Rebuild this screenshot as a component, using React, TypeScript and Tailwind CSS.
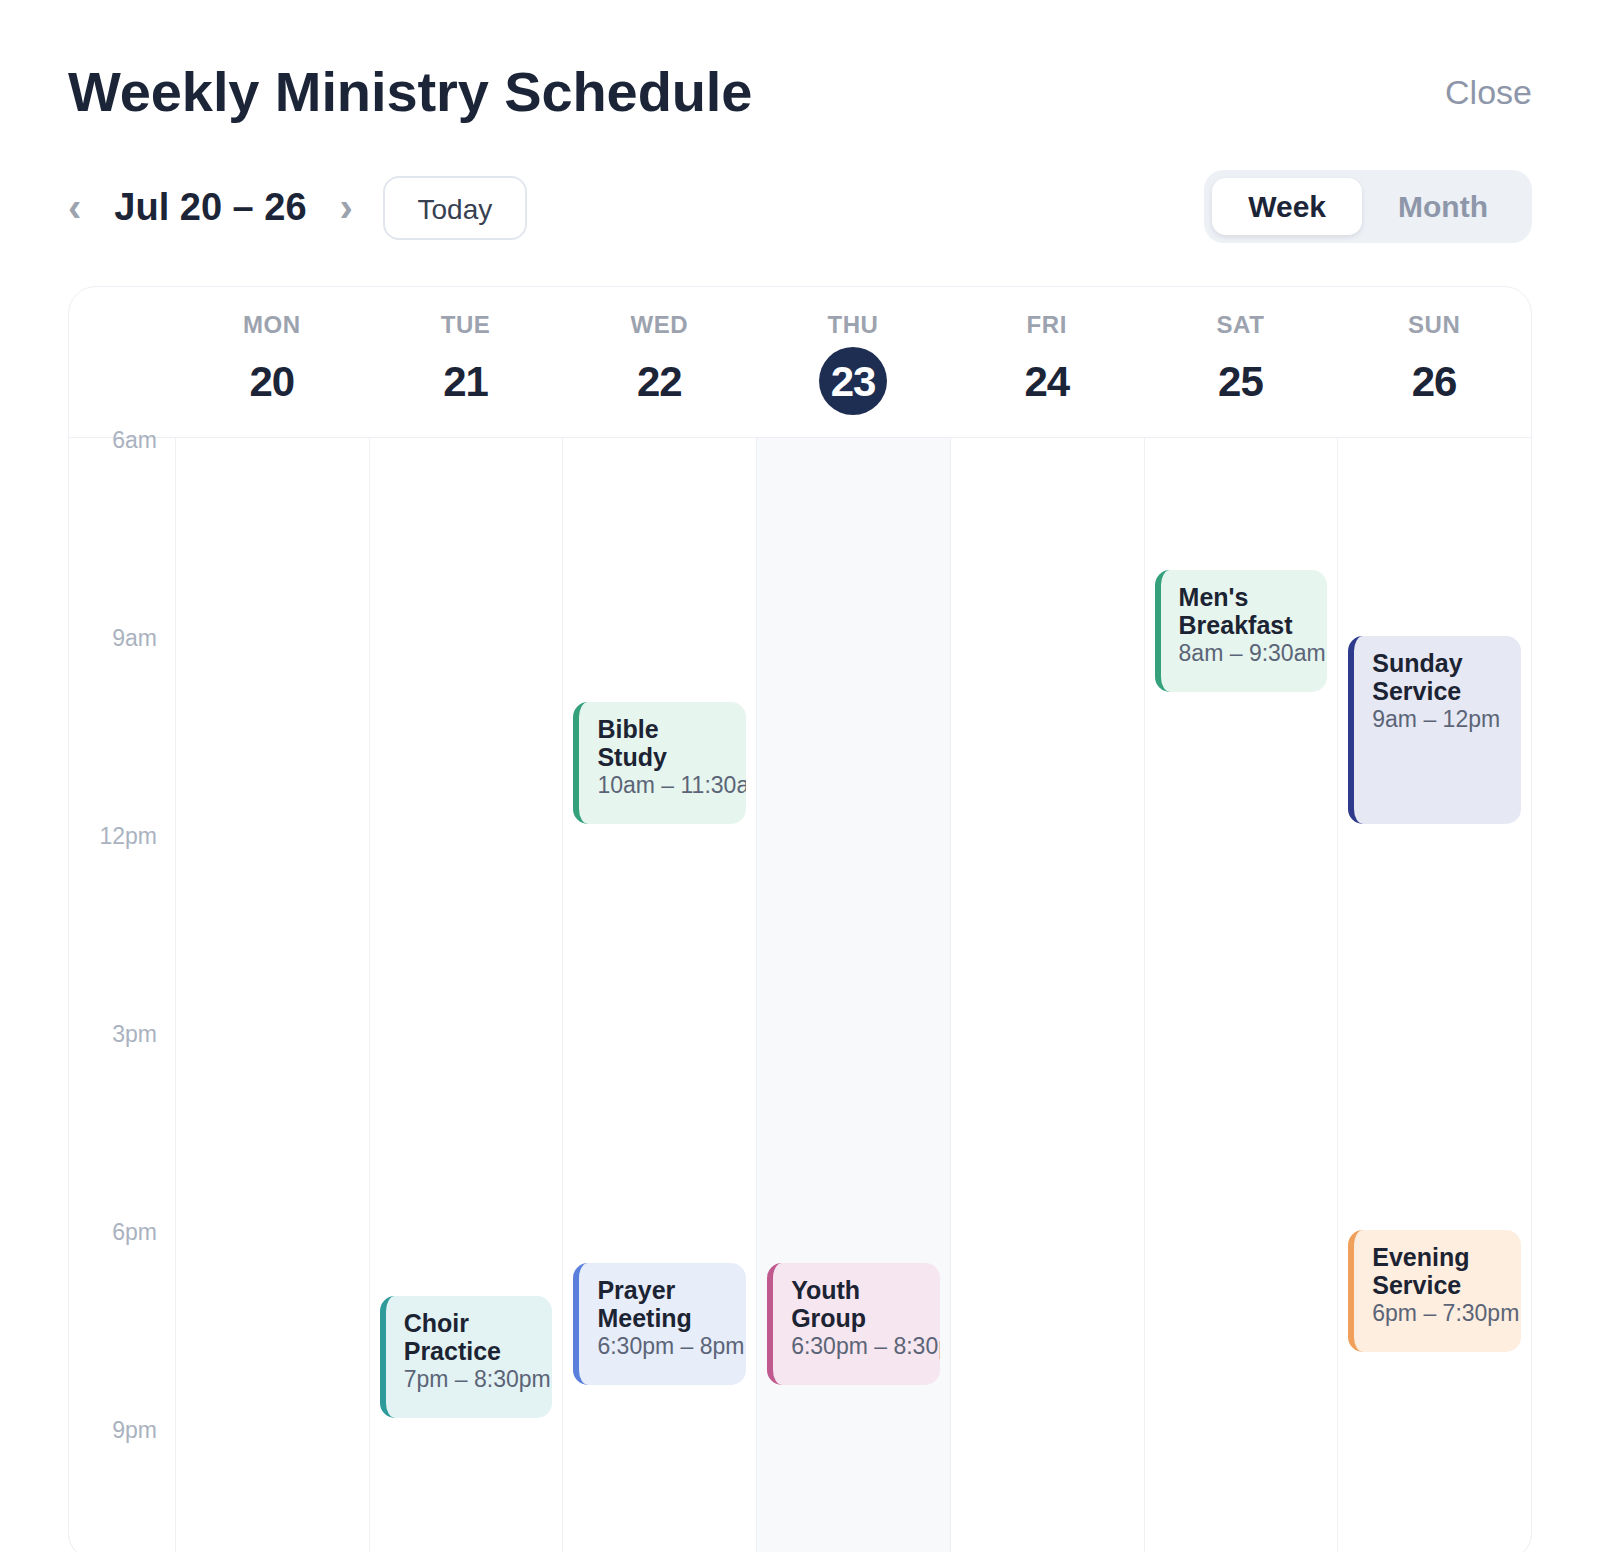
import React from 'react'

const HOUR = 66
const START = 6
const HOURS = 17

const days = [
  { name: 'MON', num: 20 },
  { name: 'TUE', num: 21 },
  { name: 'WED', num: 22 },
  { name: 'THU', num: 23, today: true },
  { name: 'FRI', num: 24 },
  { name: 'SAT', num: 25 },
  { name: 'SUN', num: 26 },
]

type Ev = {
  day: number
  title: string
  time: string
  start: number
  end: number
  tone: string
}

const events: Ev[] = [
  { day: 1, title: 'Choir Practice', time: '7pm – 8:30pm', start: 19, end: 20.5, tone: 'bg-[#e3f3f3] border-[#2e9a9a]' },
  { day: 2, title: 'Bible Study', time: '10am – 11:30am', start: 10, end: 11.5, tone: 'bg-[#e6f5ee] border-[#34a07c]' },
  { day: 2, title: 'Prayer Meeting', time: '6:30pm – 8pm', start: 18.5, end: 20, tone: 'bg-[#e7edf9] border-[#5b7fdc]' },
  { day: 3, title: 'Youth Group', time: '6:30pm – 8:30pm', start: 18.5, end: 20.5, tone: 'bg-[#f5e6ef] border-[#c05a8e]' },
  { day: 5, title: "Men's Breakfast", time: '8am – 9:30am', start: 8, end: 9.5, tone: 'bg-[#e6f5ee] border-[#34a07c]' },
  { day: 6, title: 'Sunday Service', time: '9am – 12pm', start: 9, end: 12, tone: 'bg-[#e6e8f4] border-[#2e3a8c]' },
  { day: 6, title: 'Evening Service', time: '6pm – 7:30pm', start: 18, end: 19.5, tone: 'bg-[#fdeedf] border-[#f0a05a]' },
]

const labels = [
  { h: 6, text: '6am' },
  { h: 9, text: '9am' },
  { h: 12, text: '12pm' },
  { h: 15, text: '3pm' },
  { h: 18, text: '6pm' },
  { h: 21, text: '9pm' },
]

function EventCard({ ev }: { ev: Ev }) {
  const top = (ev.start - START) * HOUR
  const height = Math.max((ev.end - ev.start) * HOUR - 10, 122)
  return (
    <div
      className={`absolute left-[10px] right-[10px] overflow-hidden rounded-[15px] border-l-[6px] pl-[18px] pr-[18px] pt-[13px] ${ev.tone}`}
      style={{ top, height }}
    >
      <div className="text-[25px] font-bold leading-[28px] text-[#1c2333]">{ev.title}</div>
      <div className="whitespace-nowrap text-[23px] leading-[29px] text-[#5b6477]">{ev.time}</div>
    </div>
  )
}

export default function App() {
  return (
    <div className="min-h-screen bg-white px-[68px] pb-16 pt-16 font-['Liberation_Sans',Arial,sans-serif]">
      {/* Title row */}
      <div className="flex items-center justify-between">
        <h1 className="text-[56px] font-bold leading-none tracking-[-0.1px] text-[#1c2538]">
          Weekly Ministry Schedule
        </h1>
        <button className="text-[34px] leading-none text-[#8e97a9]">Close</button>
      </div>

      {/* Navigation row */}
      <div className="mt-[50px] flex items-center justify-between">
        <div className="flex items-center">
          <button className="text-[40px] font-bold leading-none text-[#9ca3af]">‹</button>
          <span className="ml-[33px] text-[38px] font-bold leading-none text-[#1c2538]">Jul 20 – 26</span>
          <button className="ml-[33px] text-[40px] font-bold leading-none text-[#9ca3af]">›</button>
          <button className="ml-[30px] mt-[2px] h-[64px] w-[144px] rounded-[16px] border-2 border-[#e2e6ee] pt-1 text-[28px] text-[#374151]">
            Today
          </button>
        </div>
        <div className="flex rounded-[20px] bg-[#edf0f5] p-2">
          <button className="h-[57px] rounded-[14px] bg-white px-9 text-[30px] font-bold text-[#1c2538] shadow-[0_2px_5px_rgba(15,23,42,0.1)]">
            Week
          </button>
          <button className="h-[57px] px-9 text-[30px] font-bold text-[#8e97a9]">Month</button>
        </div>
      </div>

      {/* Calendar card */}
      <div className="mt-[43px] overflow-hidden rounded-[28px] border border-[#eceef3]">
        <div className="grid grid-cols-[106px_repeat(7,1fr)] border-b border-[#eceef3]">
          <div />
          {days.map((d) => (
            <div key={d.name} className="flex flex-col items-center pb-[22px] pt-6">
              <span className="text-[24px] font-bold leading-[28px] tracking-wide text-[#9ca3af]">{d.name}</span>
              <span
                className={`mt-2 flex h-[68px] w-[68px] items-center justify-center rounded-full text-[42px] font-bold tracking-tight ${
                  d.today ? 'bg-[#1e2d52] text-white' : 'text-[#1c2538]'
                }`}
              >
                {d.num}
              </span>
            </div>
          ))}
        </div>

        <div className="grid grid-cols-[106px_repeat(7,1fr)]" style={{ height: HOURS * HOUR }}>
          <div className="relative">
            {labels.map((l) => (
              <span
                key={l.text}
                className="absolute right-[18px] text-[23px] leading-none text-[#aab2c0]"
                style={{ top: (l.h - START) * HOUR - 9 }}
              >
                {l.text}
              </span>
            ))}
          </div>
          {days.map((d, i) => (
            <div
              key={d.name}
              className={`relative border-l border-[#eef0f4] ${d.today ? 'bg-[#f8f9fb]' : ''}`}
            >
              {events
                .filter((e) => e.day === i)
                .map((e) => (
                  <EventCard key={e.title} ev={e} />
                ))}
            </div>
          ))}
        </div>
      </div>
    </div>
  )
}
